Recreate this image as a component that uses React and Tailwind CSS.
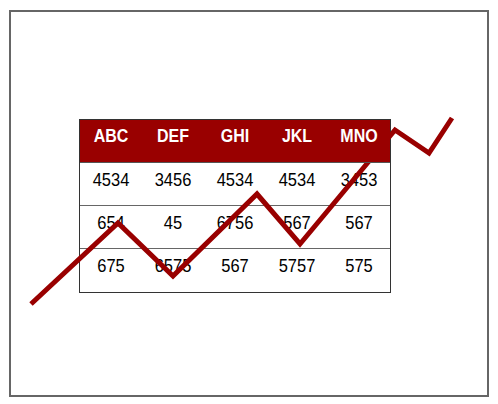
export default function App() {
  const header = ["ABC", "DEF", "GHI", "JKL", "MNO"];
  const rows = [
    ["4534", "3456", "4534", "4534", "3453"],
    ["654", "45", "6756", "567", "567"],
    ["675", "6575", "567", "5757", "575"],
  ];
  return (
    <div className="relative w-[498px] h-[404px] bg-white pt-[10px] pl-[9px]" style={{ fontFamily: '"Liberation Sans", Arial, sans-serif' }}>
      <div className="w-[480px] h-[387px] border-2 border-[#666666]">
        <div className="ml-[68px] mt-[107px] w-[312px] border border-[#333333]">
          <div className="relative z-20 grid grid-cols-5 bg-[#990000] h-[43px] border-b border-[#555555]">
            {header.map((h) => (
              <div key={h} className="text-center text-white font-bold text-[16px] leading-[20px] pt-[6px]">
                <span className="inline-block scale-y-115">{h}</span>
              </div>
            ))}
          </div>
          {rows.map((r, i) => (
            <div key={i} className={"grid grid-cols-5 h-[43px] " + (i < 2 ? "border-b border-[#666666]" : "")}>
              {r.map((c, j) => (
                <div key={j} className="text-center text-black text-[16.5px] leading-[20px] pt-[6px]">
                  <span className="inline-block scale-y-115">{c}</span>
                </div>
              ))}
            </div>
          ))}
        </div>
      </div>
      <svg className="absolute left-0 top-0 z-10 pointer-events-none" width="498" height="404" viewBox="0 0 498 404">
        <polyline
          points="31,304 118,223 173,276 257,194 300,244 395,130 429,153 452,118"
          fill="none"
          stroke="#990000"
          strokeWidth="5"
          strokeLinejoin="miter"
        />
      </svg>
    </div>
  );
}
